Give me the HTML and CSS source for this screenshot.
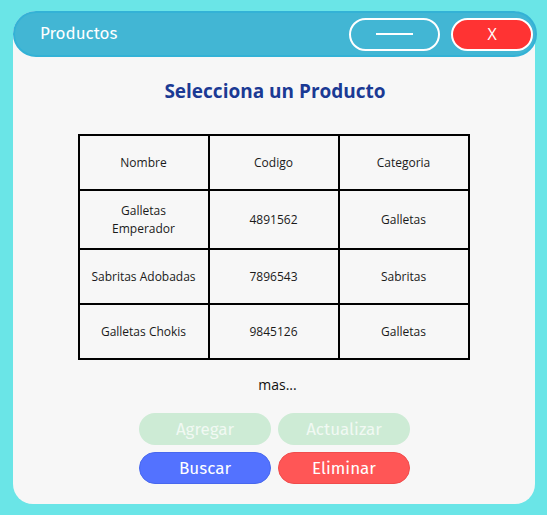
FILE: index.html
```html
<!DOCTYPE html>
<html>
<head>
<meta charset="utf-8">
<link rel="stylesheet" href="styles.css">
</head>
<body>
<div class="window">
  <div class="titlebar">
    <span class="title">Productos</span>
    <div class="controls">
      <button class="btn-min"><span class="min-line"></span></button>
      <button class="btn-close">X</button>
    </div>
  </div>
  <div class="content">
    <h1 class="heading">Selecciona un Producto</h1>
    <table class="grid">
      <tr class="row-head"><td>Nombre</td><td>Codigo</td><td>Categoria</td></tr>
      <tr class="row-a"><td>Galletas<br>Emperador</td><td>4891562</td><td>Galletas</td></tr>
      <tr class="row-b"><td>Sabritas Adobadas</td><td>7896543</td><td>Sabritas</td></tr>
      <tr class="row-b"><td>Galletas Chokis</td><td>9845126</td><td>Galletas</td></tr>
    </table>
    <div class="more">mas...</div>
    <div class="actions">
      <button class="act act-disabled">Agregar</button>
      <button class="act act-disabled">Actualizar</button>
      <button class="act act-blue">Buscar</button>
      <button class="act act-red">Eliminar</button>
    </div>
  </div>
</div>
</body>
</html>
```

FILE: styles.css
```css
html, body {
  margin: 0;
  padding: 0;
  background: #6ae5e7;
  font-family: "Open Sans", "Noto Sans", sans-serif;
}
body {
  padding: 11px 12px 0 13px;
}
.window {
  width: 522px;
  height: 493px;
  background: #f7f7f7;
  border-radius: 23px 23px 20px 20px;
  display: flex;
  flex-direction: column;
}
.titlebar {
  height: 46px;
  margin-right: -2px;
  box-sizing: border-box;
  background: #42b6d4;
  border: 2px solid #33b2d6;
  border-radius: 23px;
  display: flex;
  align-items: center;
  justify-content: space-between;
  padding: 0 2px 0 25px;
}
.title {
  color: #ffffff;
  font-size: 17px;
  font-family: "Fira Sans", "Open Sans", sans-serif;
  margin-top: -1px;
}
.controls {
  display: flex;
  gap: 11px;
  align-items: center;
}
.btn-min, .btn-close {
  height: 33px;
  border: 2px solid #ffffff;
  border-radius: 17px;
  box-sizing: border-box;
  padding: 0;
  display: flex;
  align-items: center;
  justify-content: center;
  cursor: pointer;
}
.btn-min {
  width: 91px;
  background: transparent;
}
.min-line {
  display: block;
  width: 37px;
  height: 2px;
  background: #ffffff;
}
.btn-close {
  width: 82px;
  background: #ff3333;
  color: #ffffff;
  font-family: "Open Sans", sans-serif;
  font-size: 16px;
}
.content {
  display: flex;
  flex-direction: column;
  align-items: center;
}
.heading {
  margin: 21px 0 0 0;
  font-size: 19px;
  font-weight: 700;
  color: #1b3a94;
  line-height: 26px;
  margin-left: 2px;
}
.grid {
  margin-top: 30px;
  margin-left: -1px;
  width: 392px;
  table-layout: fixed;
  border-collapse: collapse;
  border: 2px solid #000;
  font-size: 12px;
  color: #1a1a1a;
}
.grid td {
  border: 2px solid #000;
  text-align: center;
  padding: 0 4px;
  line-height: 18px;
}
.row-head td { height: 53px; }
.row-a td { height: 57px; }
.row-b td { height: 53px; }
.more {
  margin-top: 15px;
  font-size: 14px;
  color: #111;
  margin-left: 7px;
}
.actions {
  margin-top: 19px;
  margin-left: 1px;
  display: grid;
  grid-template-columns: 132px 132px;
  column-gap: 7px;
  row-gap: 7px;
}
.act {
  height: 32px;
  border-radius: 16px;
  border: 1px solid transparent;
  font-family: "Fira Sans", "Open Sans", sans-serif;
  font-size: 17px;
  color: #ffffff;
  padding: 0;
}
.act-disabled {
  background: #cdebd5;
  color: #f1f9f3;
}
.act-blue {
  background: #5372ff;
  border-color: #4868ee;
}
.act-red {
  background: #ff5656;
  border-color: #f04c4c;
}
```
